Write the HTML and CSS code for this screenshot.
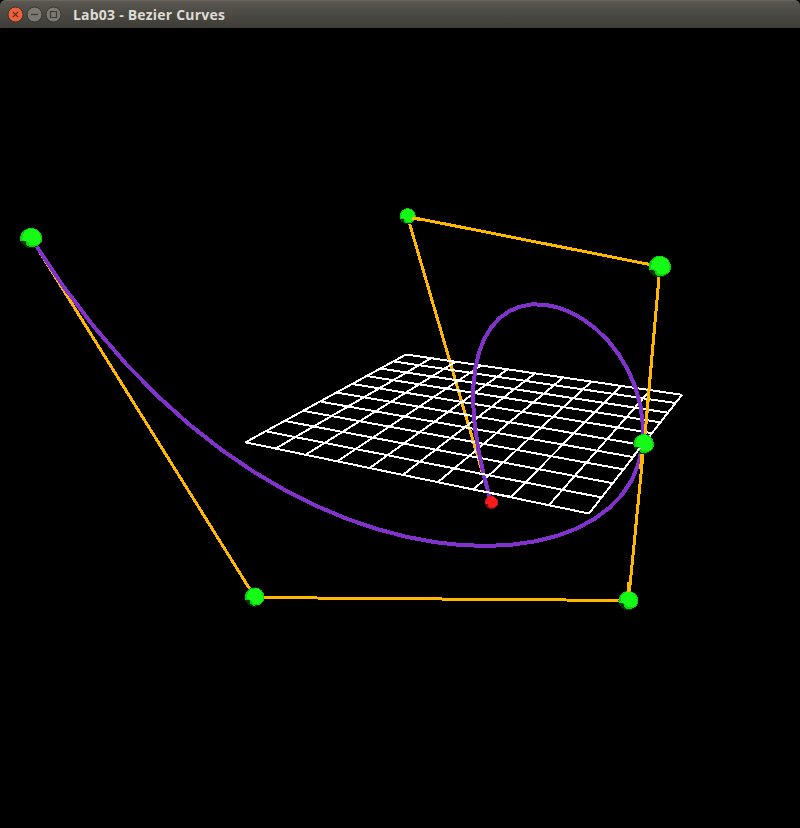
FILE: index.html
```html
<!DOCTYPE html>
<html lang="en">
<head>
<meta charset="utf-8">
<title>Lab03 - Bezier Curves</title>
<link rel="stylesheet" href="styles.css">
</head>
<body>
<main class="window">
<header class="titlebar">
<div class="controls">
<svg class="button close" viewBox="0 0 17 17"><circle cx="8.5" cy="8.5" r="7.5"/><path d="M5.8 5.8l5.4 5.4M11.2 5.8l-5.4 5.4"/></svg>
<svg class="button" viewBox="0 0 17 17"><circle cx="8.5" cy="8.5" r="7.5"/><path d="M5 8.5h7"/></svg>
<svg class="button" viewBox="0 0 17 17"><circle cx="8.5" cy="8.5" r="7.5"/><path d="M5.5 5.5h6v6h-6z"/></svg>
</div>
<h1 class="title">Lab03 - Bezier Curves</h1>
</header>
<svg class="scene" viewBox="0 28 800 800">
<defs>
<g id="ball"><circle class="dark" r="10"/><path class="mid" d="M-9.500 3A10 10 0 1 1 9 5L5 8-1 9-4 7-5 3z"/><path class="light" d="M-7-4L-4-8 2-9 7-6 9 0 8 5 4 7-1 7-4 3-8 2z"/></g>
</defs>
<path class="control" d="M491 502L407.500 216.500 660 266.500 644 444 628.500 600.500 255 597.500 31 238"/>
<g id="grid" class="grid"></g>
<g id="curves" class="curve"></g>
<path class="control" d="M659 277L645 436M642 454L640.500 469"/>
<path class="grid" d="M471 489.100L511 496.800M478 473.200L494 476.300"/>
<g class="green">
<use href="#ball" transform="translate(31 238) scale(1.1 1.03)"/>
<use href="#ball" transform="translate(407.500 216.200) scale(.81)"/>
<use href="#ball" transform="translate(659.700 266.500) scale(1.1)"/>
<use href="#ball" transform="translate(643.500 444) scale(1.02)"/>
<use href="#ball" transform="translate(254.500 597) scale(.98)"/>
<use href="#ball" transform="translate(628.300 600.500) scale(.98)"/>
</g>
<g class="red"><use href="#ball" transform="translate(491.300 502.500) scale(.66)"/></g>
<path class="control" d="M412 218L421 219.800M628.300 592L629 582"/>
<path class="grid" d="M632.700 457L640 448"/>
</svg>
</main>
<script src="scene.js"></script>
</body>
</html>
```
FILE: styles.css
```css
html, body { margin: 0; background: #000; }
.window { width: 800px; height: 828px; display: flex; flex-direction: column; background: #000; overflow: hidden; }
.titlebar { box-sizing: border-box; height: 28px; flex: none; display: flex; align-items: center; gap: 11px; padding: 0 7px; border-radius: 6px 6px 0 0; background: linear-gradient(#5e5c54, #56544d 12%, #3d3c37); box-shadow: inset 0 1px #68665e; }
.controls { display: flex; gap: 2px; padding-top: 1px; }
.button { width: 17px; height: 17px; display: block; }
.button circle { fill: #7b7971; stroke: #36352f; stroke-width: 1; }
.button path { fill: none; stroke: #3b3a35; stroke-width: 1.2; }
.close circle { fill: #ed6238; }
.close path { stroke: #572b1b; }
.title { margin: 0; padding-top: 1px; font: 700 14px/28px "Open Sans", "Noto Sans", sans-serif; letter-spacing: .21px; color: #dfdbd2; white-space: nowrap; }
.scene { width: 800px; height: 800px; display: block; shape-rendering: crispEdges; }
.grid { fill: none; stroke: #fff; stroke-width: 2; }
.control { fill: none; stroke: #ffb700; stroke-width: 3; }
.curve { fill: none; stroke: #8132cd; stroke-width: 4; }
.green { --dark: #063806; --mid: #0bd20b; --light: #15fb17; }
.red { --dark: #790b0b; --mid: #d91515; --light: #fc1b1b; }
.dark { fill: var(--dark); }
.mid { fill: var(--mid); }
.light { fill: var(--light); }
```
FILE: scene.js
```js
const NS = "http://www.w3.org/2000/svg";

function addPath(parent, points) {
  const path = document.createElementNS(NS, "path");
  path.setAttribute("d", "M" + points.map(p => p.map(v => v.toFixed(2)).join(" ")).join("L"));
  document.getElementById(parent).appendChild(path);
}

// Matching points on opposite edges of the ground plane.
const front = [[245.5,442.3],[275.7,448.5],[305.5,454.8],[337.5,461.2],[369.7,468],[402.7,475],[438,482],[473.5,489.5],[511,497],[549,505],[589,513.5]];
const back = [[406,354.5],[431,358.3],[456,361.5],[481.5,365.2],[508,369],[535.5,373],[563.5,377.2],[591.5,381.5],[621,385.7],[650.5,390],[682,394.8]];
const left = [[406,354.5],[394,361.5],[380.5,368.5],[366.5,376],[352.5,384],[337.5,392.7],[321,401.7],[304,411],[285,421],[266,431.3],[245.5,442.3]];
const right = [[682,394.8],[675,403],[667.7,412.7],[660,422.3],[651.2,433],[642,445],[632.7,457],[623,469.3],[613.3,483.3],[601.7,497.5],[589,513.5]];
front.forEach((p, i) => addPath("grid", [p, back[i]]));
left.forEach((p, i) => addPath("grid", [p, right[i]]));

// Cubic segments under perspective; the third value is the point's weight.
function bezier(points) {
  const result = [];
  for (let i = 0; i <= 25; i++) {
    const t = i / 25, u = 1 - t;
    const c = [u ** 3, 3 * u * u * t, 3 * u * t * t, t ** 3];
    let x = 0, y = 0, w = 0;
    points.forEach((p, k) => {
      const f = c[k] * p[2];
      x += p[0] * f; y += p[1] * f; w += f;
    });
    result.push([x / w, y / w]);
  }
  addPath("curves", result);
}
bezier([[491,502,1.5],[407,217,1.23],[659,266.5,.93],[642.5,444,1]]);
bezier([[642.5,444,1],[628,600,1.05],[255,597,1.05],[31,238,.91]]);
```
